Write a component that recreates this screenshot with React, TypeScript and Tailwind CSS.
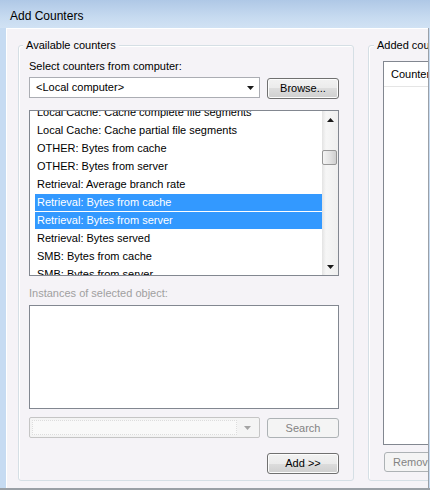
import React from 'react'

const counters = [
  'Local Cache: Cache complete file segments',
  'Local Cache: Cache partial file segments',
  'OTHER: Bytes from cache',
  'OTHER: Bytes from server',
  'Retrieval: Average branch rate',
  'Retrieval: Bytes from cache',
  'Retrieval: Bytes from server',
  'Retrieval: Bytes served',
  'SMB: Bytes from cache',
  'SMB: Bytes from server',
]

const selected = [5, 6]

function Arrow({ up = false, color = '#1a1a1a' }: { up?: boolean; color?: string }) {
  return (
    <svg width="7" height="4" viewBox="0 0 7 4" className="block">
      <path d={up ? 'M0 4 L3.5 0 L7 4 Z' : 'M0 0 L7 0 L3.5 4 Z'} fill={color} />
    </svg>
  )
}

function Button({ children, disabled = false, className = '' }: { children: React.ReactNode; disabled?: boolean; className?: string }) {
  return (
    <button
      className={
        disabled
          ? `flex items-center rounded-[3px] border border-[#adb2b5] bg-[#f4f4f4] text-[#838383] ${className}`
          : `flex items-center rounded-[3px] border border-[#707070] bg-[linear-gradient(#f2f2f2,#ebebeb_50%,#dddddd_50%,#cfcfcf)] text-black shadow-[inset_0_0_0_1px_#fcfcfc] ${className}`
      }
    >
      {children}
    </button>
  )
}

function Scrollbar() {
  return (
    <div className="flex w-[16px] flex-col bg-[linear-gradient(90deg,#e3e3e3,#f6f6f6_25%,#efefef)]">
      <div className="flex h-[17px] items-center justify-center">
        <Arrow up />
      </div>
      <div className="mt-[22px] h-[15px] w-[15px] rounded-[2px] border border-[#979797] bg-[linear-gradient(90deg,#f4f4f4,#e4e4e4_50%,#cfcfcf)]" />
      <div className="flex-1" />
      <div className="flex h-[17px] items-center justify-center">
        <Arrow />
      </div>
    </div>
  )
}

export default function App() {
  return (
    <div className="flex h-[490px] w-[430px] flex-col overflow-hidden bg-[#c4d9f0] font-['Liberation_Sans',Arial,sans-serif] text-[11px] text-black">
      {/* Title bar */}
      <div className="flex h-[28px] items-center bg-[linear-gradient(#afc8e6,#c6daf0_60%,#d1e2f4)] pl-[10px] pt-[3px] text-[12px]">
        Add Counters
      </div>

      <div className="flex flex-1">
        <div className="w-[6px] bg-[#c6dbf2]" />

        {/* Dialog body */}
        <div className="flex w-[422px] gap-[14px] overflow-hidden border-t border-l border-white bg-[#f5f3f7] pl-[11px] pt-[16px]">
          {/* Available counters */}
          <div className="relative h-[436px] w-[336px] shrink-0 rounded-[3px] border border-[#d5dfe5] shadow-[inset_1px_1px_0_#fff]">
            <span className="absolute -top-[9px] left-[4px] bg-[#f5f3f7] px-[3px] leading-[16px]">Available counters</span>
            <div className="flex flex-col pl-[10px] pt-[12px]">
              <div className="leading-[16px]">Select counters from computer:</div>

              <div className="mt-[3px] flex gap-[7px]">
                <div className="flex h-[21px] w-[231px] items-center justify-between border border-[#abadb3] bg-white pl-[6px] pr-[5px]">
                  <span>&lt;Local computer&gt;</span>
                  <Arrow />
                </div>
                <Button className="mt-[1px] h-[21px] w-[72px] justify-center">Browse...</Button>
              </div>

              <div className="mt-[11px] flex h-[166px] w-[310px] border border-[#828790] bg-white">
                <div className="flex-1 overflow-hidden">
                  <div className="-mt-[7px]">
                    {counters.map((c, i) => (
                      <div key={c} className="h-[18px] pl-[5px]">
                        <div
                          className={
                            selected.includes(i)
                              ? 'h-[17px] whitespace-nowrap bg-[#3399ff] pl-[2px] leading-[17px] text-white'
                              : 'h-[17px] whitespace-nowrap pl-[2px] leading-[17px]'
                          }
                        >
                          {c}
                        </div>
                      </div>
                    ))}
                  </div>
                </div>
                <Scrollbar />
              </div>

              <div className="mt-[9px] leading-[16px] text-[#a0a0a0]">Instances of selected object:</div>
              <div className="mt-[4px] h-[104px] w-[310px] border border-[#828790] bg-white" />

              <div className="mt-[8px] flex gap-[7px]">
                <div className="flex h-[21px] w-[231px] items-center rounded-[2px] border border-[#c5c5c5] bg-[#f4f4f4] p-[2px]">
                  <div className="h-full flex-1 border border-dotted border-[#dddddd] bg-[#f9f9f9]" />
                  <div className="flex w-[20px] items-center justify-center">
                    <Arrow color="#a4a4a4" />
                  </div>
                </div>
                <Button disabled className="mt-[1px] h-[20px] w-[72px] justify-center">Search</Button>
              </div>

              <div className="mt-[15px] flex w-[310px] justify-end">
                <Button className="h-[21px] w-[72px] justify-center">Add &gt;&gt;</Button>
              </div>
            </div>
          </div>

          {/* Added counters */}
          <div className="relative h-[436px] w-[120px] shrink-0 rounded-[3px] border border-[#d5dfe5] shadow-[inset_1px_1px_0_#fff]">
            <span className="absolute -top-[9px] left-[5px] bg-[#f5f3f7] px-[3px] leading-[16px] whitespace-nowrap">Added counters</span>
            <div className="flex flex-col pl-[14px] pt-[15px]">
              <div className="h-[384px] w-[120px] border border-[#828790] bg-white">
                <div className="flex h-[25px] items-center border-b border-[#e5e5e5] pl-[7px]">Counter</div>
              </div>
              <Button disabled className="ml-px mt-[7px] h-[20px] w-[72px] pl-[8px]">Remove</Button>
            </div>
          </div>
        </div>

        <div className="w-px bg-[#9aa0a8]" />
        <div className="w-px bg-[#c6dbf2]" />
      </div>

      <div className="h-[2px] bg-[#9aa0a6]" />
    </div>
  )
}
